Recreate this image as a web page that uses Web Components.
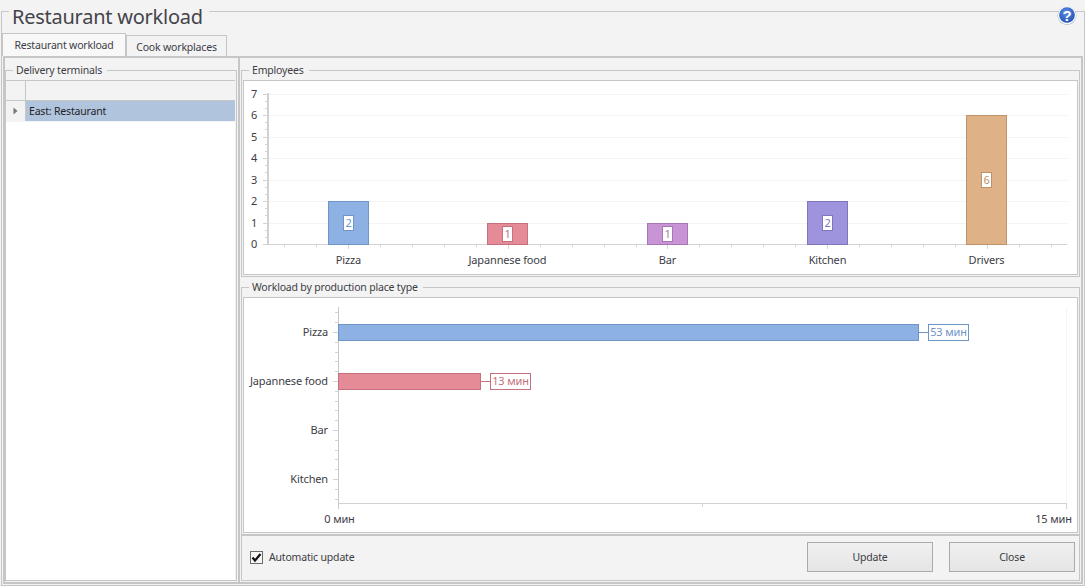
<!DOCTYPE html>
<html>
<head>
<meta charset="utf-8">
<title>Restaurant workload</title>
<style>
    html, body { margin: 0; background: #f3f3f3; }
    body { font: 10.5px "Noto Sans", sans-serif; letter-spacing: -.18px; color: #3d3d45; }
</style>
</head>
<body>
<app-window>
    <group-box class="outer">
        <span slot="title">Restaurant workload</span>
        <tab-view>
            <tab-item slot="tabs" active>Restaurant workload</tab-item>
            <tab-item slot="tabs">Cook workplaces</tab-item>
            <group-box slot="left" class="plain">
                <span slot="title">Delivery terminals</span>
                <terminal-grid>East: Restaurant</terminal-grid>
            </group-box>
            <group-box class="employees">
                <span slot="title">Employees</span>
                <column-chart></column-chart>
            </group-box>
            <group-box class="workload">
                <span slot="title">Workload by production place type</span>
                <bar-chart></bar-chart>
            </group-box>
            <footer-bar>
                <check-box checked>Automatic update</check-box>
                <app-button slot="actions">Update</app-button>
                <app-button slot="actions">Close</app-button>
            </footer-bar>
        </tab-view>
    </group-box>
</app-window>

<script>
"use strict"
const LINE = '#c6c6c6';

class AppWindow extends HTMLElement{
    connectedCallback(){
        this.attachShadow({mode: "open"});
        this.shadowRoot.innerHTML = `
        <style>
        :host{
            display: block;
            position: relative;
            box-sizing: border-box;
            width: 1085px;
            height: 586px;
            padding-left: 1px;
        }
        ::slotted(group-box){ height: 586px; }
        svg{ position: absolute; left: 1057px; top: 5px; }
        </style>
        <slot></slot>
        <svg width="20" height="20" viewBox="0 0 20 20">
            <defs>
                <radialGradient id="ball" cx="45%" cy="35%" r="70%">
                    <stop offset="0" stop-color="#5d8fe6"/>
                    <stop offset="1" stop-color="#1f4eb0"/>
                </radialGradient>
            </defs>
            <circle cx="10" cy="10.5" r="9.5" fill="#8f98a8" opacity=".65"/>
            <circle cx="10" cy="10" r="9.2" fill="#f4f6fa"/>
            <circle cx="10" cy="10" r="7.8" fill="url(#ball)"/>
            <text x="10" y="15.5" text-anchor="middle" font-family="Liberation Sans" font-weight="700" font-size="15" fill="#fff">?</text>
        </svg>`;
    }
}

class GroupBox extends HTMLElement{
    connectedCallback(){
        this.attachShadow({mode: "open"});
        this.shadowRoot.innerHTML = `
        <style>
        :host{
            display: flex;
            flex-direction: column;
            box-sizing: border-box;
            --head: 14px;
            --title-height: 14px;
            --pad: 3px 1px 1px;
            --gap-l: 3px;
            --gap-r: 5px;
        }
        :host(.outer){
            --head: 22px;
            --title-height: 34px;
            --pad: 11px 1px 1px 0;
            --gap-l: 3px;
            --gap-r: 6px;
        }
        :host(.plain){ --pad: 3px 1px 0 0; }
        .head{
            display: flex;
            flex: none;
            height: var(--head);
        }
        .start, .end{
            align-self: flex-end;
            height: 50%;
            box-sizing: border-box;
            border-top: 1px solid ${LINE};
        }
        .start{ flex: 0 0 8px; border-left: 1px solid ${LINE}; }
        .end{ flex: 1; border-right: 1px solid ${LINE}; }
        .title{
            padding: 0 var(--gap-r) 0 var(--gap-l);
            height: var(--title-height);
            line-height: var(--title-height);
            white-space: nowrap;
        }
        :host(.outer) .title{ font-size: 20px; letter-spacing: -.25px; color: #44444a; }
        .body{
            flex: 1;
            min-height: 0;
            display: flex;
            box-sizing: border-box;
            padding: var(--pad);
            border: 1px solid ${LINE};
            border-top: 0;
        }
        ::slotted(:not([slot])){ flex: 1; min-width: 0; }
        </style>
        <div class="head">
            <div class="start"></div>
            <div class="title"><slot name="title"></slot></div>
            <div class="end"></div>
        </div>
        <div class="body"><slot></slot></div>`;
    }
}

class TabItem extends HTMLElement{
    connectedCallback(){
        this.attachShadow({mode: "open"});
        this.shadowRoot.innerHTML = `
        <style>
        :host{
            display: flex;
            align-items: center;
            justify-content: center;
            box-sizing: border-box;
            width: 101px;
            height: 21px;
            border: 1px solid ${LINE};
            border-bottom: 0;
            background: #f3f3f3;
            padding-top: 1px;
        }
        :host([active]){
            width: 124px;
            height: 23px;
            background: #f8f8f8;
            padding-top: 0;
        }
        </style>
        <slot></slot>`;
    }
}

class TabView extends HTMLElement{
    connectedCallback(){
        this.attachShadow({mode: "open"});
        this.shadowRoot.innerHTML = `
        <style>
        :host{
            display: flex;
            flex-direction: column;
            box-sizing: border-box;
        }
        .tabs{
            display: flex;
            align-items: flex-end;
            height: 23px;
            flex: none;
        }
        .pane{
            flex: 1;
            min-height: 0;
            display: flex;
            margin-left: 1px;
            padding-right: 1px;
            padding-bottom: 1px;
            border: 2px solid ${LINE};
        }
        .left{
            display: flex;
            flex: 0 0 232px;
            padding-top: 5px;
        }
        .left ::slotted(*){ flex: 1; min-width: 0; }
        .splitter{
            flex: 0 0 2px;
            margin: 0 1px;
            background: ${LINE};
            margin-bottom: -1px;
        }
        .right{
            flex: 1;
            min-width: 0;
            display: flex;
            flex-direction: column;
            padding-top: 5px;
        }
        .right ::slotted(.employees){ height: 214px; flex: none; margin-bottom: 3px; }
        .right ::slotted(.workload){ height: 255px; flex: none; }
        </style>
        <div class="tabs"><slot name="tabs"></slot></div>
        <div class="pane">
            <div class="left"><slot name="left"></slot></div>
            <div class="splitter"></div>
            <div class="right"><slot></slot></div>
        </div>`;
    }
}

class TerminalGrid extends HTMLElement{
    connectedCallback(){
        this.attachShadow({mode: "open"});
        this.shadowRoot.innerHTML = `
        <style>
        :host{
            display: block;
            background: #fff;
            color: #1f1f25;
        }
        .header, .row{ display: flex; }
        .header{
            height: 21px;
            box-sizing: border-box;
            background: #f3f3f3;
            border-top: 1px solid ${LINE};
            border-bottom: 1px solid ${LINE};
        }
        .indicator{
            flex: 0 0 20px;
            box-sizing: border-box;
            border-right: 1px solid ${LINE};
            background: #f3f3f3;
            display: flex;
            align-items: center;
            justify-content: center;
        }
        .row{ height: 20px; border-bottom: 1px solid #f3f3f3; }
        .cell{
            flex: 1;
            background: #b0c4de;
            padding-left: 3px;
            line-height: 20px;
        }
        </style>
        <div class="header"><div class="indicator"></div></div>
        <div class="row">
            <div class="indicator">
                <svg width="5" height="8" viewBox="0 0 5 8"><path d="M0.5 0.5 L4.5 4 L0.5 7.5 Z" fill="#777"/></svg>
            </div>
            <div class="cell"><slot></slot></div>
        </div>`;
    }
}

// chart helpers, coordinates are page coordinates through the viewBox
const line = (x1, y1, x2, y2, color) => `<line x1="${x1}" y1="${y1}" x2="${x2}" y2="${y2}" stroke="${color}"/>`;
const CHART_STYLE = `
    :host{
        display: block;
        box-sizing: border-box;
        border: 1px solid ${LINE};
        background: #fff;
    }
    svg{ display: block; width: 100%; height: 100%; font: 11px "Noto Sans", sans-serif; letter-spacing: -.15px; fill: #3d3d45; }
    line, rect{ shape-rendering: crispEdges; }
`;

class ColumnChart extends HTMLElement{
    constructor(){
        super();
        this.items = [
            {name: "Pizza", value: 2, x: 328, fill: "#8db1e3", stroke: "#6f94c6"},
            {name: "Japannese food", value: 1, x: 487, fill: "#e58b97", stroke: "#c5707c"},
            {name: "Bar", value: 1, x: 647, fill: "#c894d6", stroke: "#a876b6"},
            {name: "Kitchen", value: 2, x: 807, fill: "#9d94dd", stroke: "#8076bb"},
            {name: "Drivers", value: 6, x: 966, fill: "#dfb186", stroke: "#be936b"}
        ];
    }

    connectedCallback(){
        this.attachShadow({mode: "open"});
        this.shadowRoot.innerHTML = `<style>${CHART_STYLE}</style>${this.render()}`;
    }

    render(){
        const base = 244, unit = 21.5;
        let out = '';
        for(let v = 1; v <= 7; v++){
            out += line(269, Math.round(base - v * unit) + .5, 1067, Math.round(base - v * unit) + .5, '#f3f3f3');
        }
        // y axis with two minor ticks per unit
        for(let i = 0; i <= 21; i++){
            const y = Math.round(base - i * unit / 3) + .5;
            out += line(i % 3 ? 265 : 263, y, 268, y, '#d2d2d2');
        }
        for(let v = 0; v <= 7; v++){
            out += `<text x="254" y="${Math.round(base - v * unit) + 4}" text-anchor="middle">${v}</text>`;
        }
        // x axis ticks
        for(let i = 0; i < 25; i++){
            const x = Math.round(284.3 + i * 31.93) + .5;
            out += line(x, base, x, i % 5 === 2 ? base + 5 : base + 3, '#d2d2d2');
        }
        out += `<rect x="267" y="93" width="2" height="152" fill="#d2d2d2"/>`;
        out += `<rect x="268" y="244" width="799" height="1" fill="#d2d2d2"/>`;
        this.items.forEach(item => {
            const top = Math.round(base - item.value * unit);
            const cx = item.x + 20.5;
            const mid = Math.round((top + base) / 2);
            out += `<rect x="${item.x + .5}" y="${top + .5}" width="40" height="${base - top}" fill="${item.fill}" stroke="${item.stroke}"/>`;
            out += `<rect x="${cx - 5}" y="${mid - 7.5}" width="10" height="15" fill="#fff" stroke="${item.stroke}"/>`;
            out += `<text x="${cx}" y="${mid + 4}" text-anchor="middle" style="fill:${item.stroke}">${item.value}</text>`;
            out += `<text x="${cx}" y="264" text-anchor="middle">${item.name}</text>`;
        });
        return `<svg viewBox="244 81 833 193">${out}</svg>`;
    }
}

class BarChart extends HTMLElement{
    constructor(){
        super();
        this.items = [
            {name: "Pizza", y: 332, end: 918, label: "53 мин", fill: "#8db1e3", stroke: "#6f94c6"},
            {name: "Japannese food", y: 381, end: 480, label: "13 мин", fill: "#e58b97", stroke: "#c5707c"},
            {name: "Bar", y: 430},
            {name: "Kitchen", y: 479}
        ];
    }

    connectedCallback(){
        this.attachShadow({mode: "open"});
        this.shadowRoot.innerHTML = `<style>${CHART_STYLE}</style>${this.render()}`;
    }

    render(){
        let out = '';
        out += line(1066.5, 308, 1066.5, 503, '#f5f5f5');
        // y axis, major tick at each category and four minor ones between
        for(let i = 0; i <= 19; i++){
            const y = Math.round(312.4 + i * 9.8) + .5;
            out += line(i % 5 === 2 ? 333 : 335, y, 338, y, '#d2d2d2');
        }
        out += `<rect x="338" y="307" width="1" height="202" fill="#c9c9c9"/>`;
        out += `<rect x="338" y="503" width="729" height="1" fill="#d2d2d2"/>`;
        out += line(1066.5, 503, 1066.5, 509, '#d2d2d2');
        out += line(702.5, 503, 702.5, 507, '#d2d2d2');
        this.items.forEach(item => {
            out += `<text x="328" y="${item.y + 4}" text-anchor="end">${item.name}</text>`;
            if(!item.label) return;
            const left = item.end + 10;
            out += `<rect x="338.5" y="${item.y - 8 + .5}" width="${item.end - 338}" height="16" fill="${item.fill}" stroke="${item.stroke}"/>`;
            out += line(item.end, item.y + .5, left, item.y + .5, item.stroke);
            out += `<rect x="${left + .5}" y="${item.y - 8 + .5}" width="40" height="16" fill="#fff" stroke="${item.stroke}"/>`;
            out += `<text x="${left + 20.5}" y="${item.y + 4}" text-anchor="middle" style="fill:${item.stroke}">${item.label}</text>`;
        });
        out += `<text x="339.5" y="523" text-anchor="middle">0 мин</text>`;
        out += `<text x="1053.5" y="523" text-anchor="middle">15 мин</text>`;
        return `<svg viewBox="244 298 833 234">${out}</svg>`;
    }
}

class FooterBar extends HTMLElement{
    connectedCallback(){
        this.attachShadow({mode: "open"});
        this.shadowRoot.innerHTML = `
        <style>
        :host{
            flex: none !important;
            display: flex;
            align-items: center;
            justify-content: space-between;
            box-sizing: border-box;
            height: 46px;
            padding: 0 4px 2px 8px;
            border: 1px solid ${LINE};
        }
        .actions{ display: flex; gap: 16px; }
        </style>
        <slot></slot>
        <div class="actions"><slot name="actions"></slot></div>`;
    }
}

class CheckBox extends HTMLElement{
    connectedCallback(){
        this.attachShadow({mode: "open"});
        this.shadowRoot.innerHTML = `
        <style>
        :host{
            display: flex;
            align-items: center;
            gap: 6px;
        }
        .box{
            box-sizing: border-box;
            width: 13px;
            height: 13px;
            border: 1px solid #6a6a6a;
            background: #f6f6f6;
            display: flex;
        }
        </style>
        <div class="box">
            <svg width="11" height="11" viewBox="0 0 11 11"><path d="M1.5 5.5 L4 8.5 L9.5 2" fill="none" stroke="#111" stroke-width="2.2"/></svg>
        </div>
        <span><slot></slot></span>`;
    }
}

class AppButton extends HTMLElement{
    connectedCallback(){
        this.attachShadow({mode: "open"});
        this.shadowRoot.innerHTML = `
        <style>
        :host{
            display: flex;
            align-items: center;
            justify-content: center;
            box-sizing: border-box;
            width: 126px;
            height: 30px;
            border: 1px solid #ababab;
            background: linear-gradient(#f0f0f0, #e5e5e5);
        }
        </style>
        <slot></slot>`;
    }
}

customElements.define('group-box', GroupBox);
customElements.define('tab-item', TabItem);
customElements.define('tab-view', TabView);
customElements.define('terminal-grid', TerminalGrid);
customElements.define('column-chart', ColumnChart);
customElements.define('bar-chart', BarChart);
customElements.define('footer-bar', FooterBar);
customElements.define('check-box', CheckBox);
customElements.define('app-button', AppButton);
customElements.define('app-window', AppWindow);
</script>
</body>
</html>
